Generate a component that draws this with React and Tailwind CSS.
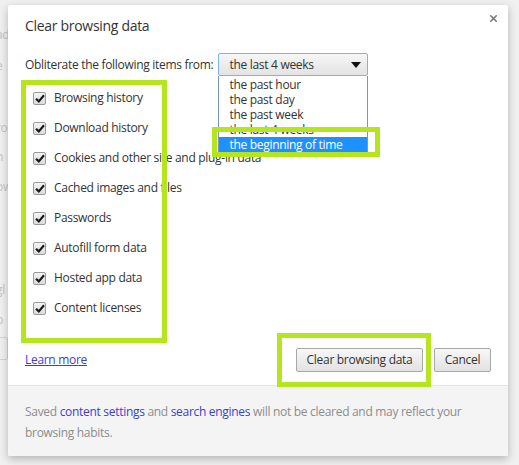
import { X } from 'lucide-react';

const items = [
    'Browsing history',
    'Download history',
    'Cookies and other site and plug-in data',
    'Cached images and files',
    'Passwords',
    'Autofill form data',
    'Hosted app data',
    'Content licenses',
];

const periods = ['the past hour', 'the past day', 'the past week', 'the last 4 weeks', 'the beginning of time'];

// scraps of the settings page showing behind the dialog
const backdrop = [
    { top: 27, text: 'ad' },
    { top: 58, text: 'e' },
    { top: 120, text: 'ro' },
    { top: 149, text: 'h' },
    { top: 179, text: 'ow' },
    { top: 282, text: 'gl' },
    { top: 312, text: 'p' },
];

const CheckBox = () => (
    <span className="w-[13px] h-[13px] shrink-0 rounded-[2px] border border-[#9a9a9a] bg-gradient-to-b from-[#f4f4f4] to-[#dcdcdc] flex items-center justify-center">
        <svg width="10" height="9" viewBox="0 0 10 9">
            <path d="M1 4.8 L3.8 7.4 L9 1.2" fill="none" stroke="#1a1a1a" strokeWidth="2.2" />
        </svg>
    </span>
);

const Highlight = ({ className }) => (
    <div className={`absolute border-[5px] border-[#b5e61d] pointer-events-none ${className}`} />
);

const App = () => {
    return (
        <div
            className="relative w-[519px] h-[465px] overflow-hidden bg-[#f0f0f0] text-[#333] tracking-[-0.3px]"
            style={{ fontFamily: '"Open Sans", "Noto Sans", sans-serif' }}
        >
            {backdrop.map((b) => (
                <span
                    key={b.top}
                    className="absolute left-[-4px] text-[12px] leading-[16px] text-[#c4c4c4]"
                    style={{ top: b.top }}
                >
                    {b.text}
                </span>
            ))}
            <div className="absolute left-[-6px] top-[337px] w-[14px] h-[23px] border border-[#d4d4d4] rounded-[2px]" />

            <div className="absolute left-[8px] top-[5px] w-[500px] h-[451px] flex flex-col bg-white rounded-[2px] shadow-[0_3px_9px_rgba(0,0,0,0.25)]">
                <button className="absolute top-[8px] right-[9px] text-[#777]">
                    <X size={11} strokeWidth={3.5} />
                </button>

                <div className="px-[17px] pt-[12px]">
                    <h1 className="text-[14px] leading-[18px] text-[#333]">Clear browsing data</h1>

                    <div className="mt-[18px] flex items-center gap-[5px] text-[12px]">
                        <span>Obliterate the following items from:</span>
                        <div className="relative">
                            <div className="w-[150px] h-[23px] border border-[#7eb4ea] rounded-[2px] bg-gradient-to-b from-[#f6f6f6] to-[#e3e3e3] flex items-center justify-between pl-[10px] pr-[6px]">
                                <span>the last 4 weeks</span>
                                <svg width="10" height="6" viewBox="0 0 10 6">
                                    <path d="M0 0 H10 L5 6 Z" fill="#111" />
                                </svg>
                            </div>
                            <ul className="absolute left-0 top-[23px] w-[150px] bg-white border border-t-0 border-[#7a96bd] pt-[1px] z-10">
                                {periods.map((p, i) => (
                                    <li
                                        key={p}
                                        className={`h-[15px] leading-[15px] pl-[10px] ${
                                            i === periods.length - 1 ? 'bg-[#1e90ff] text-white' : ''
                                        }`}
                                    >
                                        {p}
                                    </li>
                                ))}
                            </ul>
                        </div>
                    </div>

                    <ul className="mt-[7px] text-[12px]">
                        {items.map((item) => (
                            <li key={item} className="h-[30px] flex items-center gap-[8px] pl-[8px]">
                                <CheckBox />
                                <span>{item}</span>
                            </li>
                        ))}
                    </ul>

                    <div className="mt-[25px] flex items-center justify-between text-[12px]">
                        <a href="#" className="text-[#3a3fd0] underline">
                            Learn more
                        </a>
                        <div className="flex gap-[11px]">
                            <button className="h-[24px] w-[127px] border border-[#a8a8a8] rounded-[2px] bg-gradient-to-b from-[#f7f7f7] to-[#e2e2e2] text-[#333]">
                                Clear browsing data
                            </button>
                            <button className="h-[24px] w-[57px] border border-[#a8a8a8] rounded-[2px] bg-gradient-to-b from-[#f7f7f7] to-[#e2e2e2] text-[#333]">
                                Cancel
                            </button>
                        </div>
                    </div>
                </div>

                <div className="mt-auto h-[71px] border-t border-[#e4e4e4] bg-[#f4f4f4] px-[17px] pt-[15px] text-[12px] leading-[21px] text-[#8c8c8c] rounded-b-[2px]">
                    Saved <a href="#" className="text-[#3a3fd0]">content settings</a> and{' '}
                    <a href="#" className="text-[#3a3fd0]">search engines</a> will not be cleared and may reflect your
                    <br />
                    browsing habits.
                </div>
            </div>

            <Highlight className="left-[21px] top-[80px] w-[146px] h-[263px]" />
            <Highlight className="left-[212px] top-[127px] w-[168px] h-[30px] z-20" />
            <Highlight className="left-[277px] top-[333px] w-[154px] h-[54px]" />
        </div>
    );
};

export default App;
